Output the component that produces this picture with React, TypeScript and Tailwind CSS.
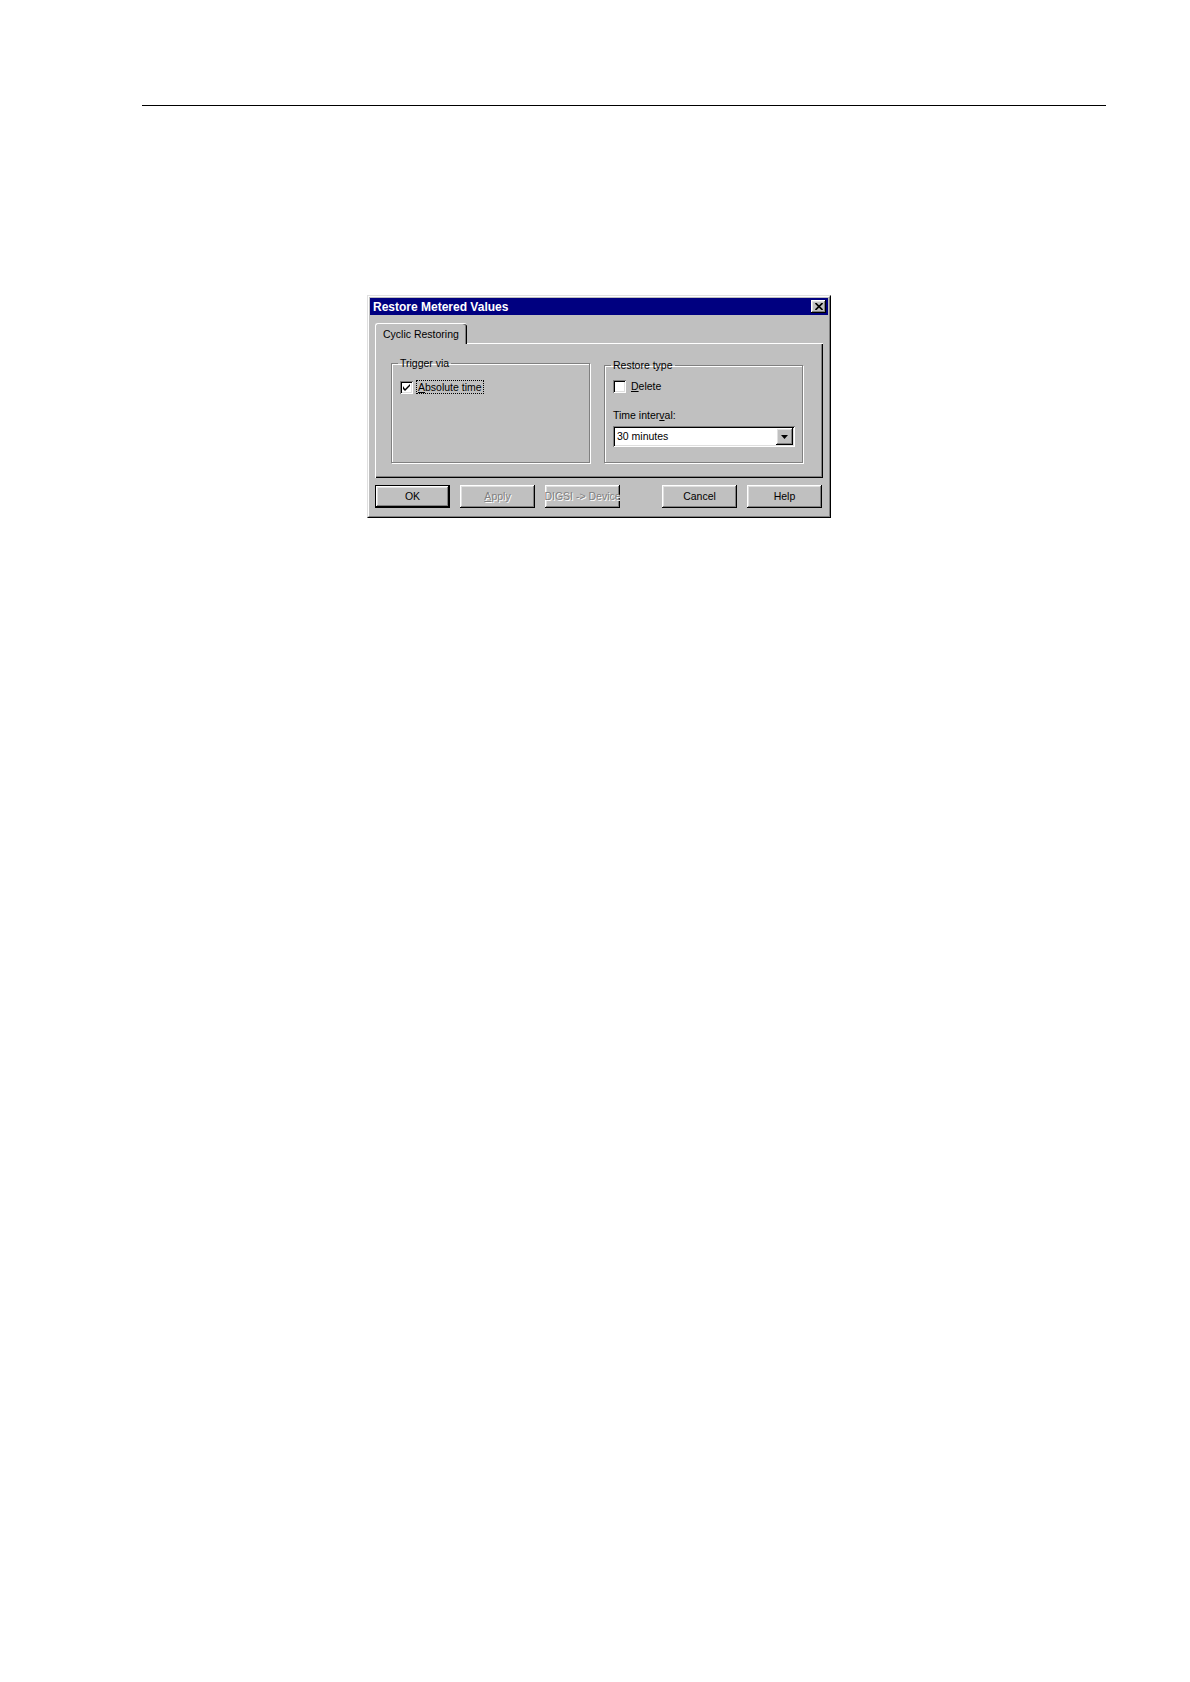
import type { ReactNode } from 'react'

const FONT = { fontFamily: '"Liberation Sans", Arial, sans-serif' }

// Win95-ish raised bevel
const RAISED =
  'shadow-[inset_-1px_-1px_0_#000,inset_1px_1px_0_#fff,inset_-2px_-2px_0_#808080,inset_2px_2px_0_#dfdfdf]'
const SUNKEN =
  'shadow-[inset_1px_1px_0_#808080,inset_-1px_-1px_0_#fff,inset_2px_2px_0_#000,inset_-2px_-2px_0_#dfdfdf]'

function Btn({ children, x, def, disabled }: { children: ReactNode; x?: string; def?: boolean; disabled?: boolean }) {
  return (
    <div
      className={`w-[75px] h-[23px] bg-[#c0c0c0] flex items-center justify-center overflow-hidden whitespace-nowrap text-[10.5px] leading-none ${
        def ? 'border border-black' : ''
      } ${x ?? ''}`}
    >
      <div
        className={`w-full h-full flex items-center justify-center overflow-hidden ${RAISED} ${
          disabled ? 'text-[#808080] [text-shadow:1px_1px_0_#fff]' : 'text-black'
        }`}
      >
        <span className="shrink-0">{children}</span>
      </div>
    </div>
  )
}

function CheckBox({ checked }: { checked?: boolean }) {
  return (
    <div className={`w-[13px] h-[13px] bg-white shrink-0 flex items-center justify-center ${SUNKEN}`}>
      {checked && (
        <svg width="7" height="7" viewBox="0 0 7 7">
          <path d="M0 2 L0 5 L2 7 L7 2 L7 0 L2 5 Z" fill="#000" />
        </svg>
      )}
    </div>
  )
}

function Group({ title, children, cls }: { title: string; children: ReactNode; cls: string }) {
  return (
    <fieldset
      className={`w-[199px] border border-[#808080] shadow-[inset_1px_1px_0_#fff,1px_1px_0_#fff] pl-[8px] pr-[7px] ${cls}`}
    >
      <legend className="-ml-[2px] px-[2px] text-[10.5px] leading-[13px] text-black">{title}</legend>
      {children}
    </fieldset>
  )
}

export default function App() {
  return (
    <div className="min-h-[1682px] w-[1190px] bg-white pt-[105px]" style={FONT}>
      {/* running header rule */}
      <div className="ml-[142px] w-[964px] h-px bg-black" />

      {/* dialog */}
      <div className="ml-[367px] mt-[189px] w-[464px] h-[223px] bg-[#c0c0c0] border border-t-[#dfdfdf] border-l-[#dfdfdf] border-r-black border-b-black">
        <div className="h-full border border-t-white border-l-white border-r-[#808080] border-b-[#808080] p-px">
          {/* title bar */}
          <div className="h-[17px] bg-[#000080] flex items-center justify-between pl-[3px] pr-[2px]">
            <span className="text-white font-bold text-[12px] leading-none">Restore Metered Values</span>
            <div className={`w-[15px] h-[13px] bg-[#c0c0c0] flex items-center justify-center ${RAISED}`}>
              <svg width="8" height="7" viewBox="0 0 8 7">
                <path d="M0.5 0 L7.5 7 M7.5 0 L0.5 7" stroke="#000" strokeWidth="1.6" />
              </svg>
            </div>
          </div>

          <div className="pl-[5px] pt-[8px]">
            {/* tab */}
            <div className="relative z-10 -mb-px w-[92px] h-[21px] bg-[#c0c0c0] border-t border-l border-t-white border-l-white rounded-tl-[3px] rounded-tr-[3px] shadow-[inset_-1px_0_0_#000,inset_-2px_0_0_#808080] flex items-center pl-[7px] text-[10.5px] leading-none">
              Cyclic Restoring
            </div>

            {/* tab panel */}
            <div className="w-[448px] h-[135px] border-t border-l border-t-white border-l-white shadow-[inset_-1px_-1px_0_#000,inset_-2px_-2px_0_#808080] flex gap-[14px] pl-[15px]">
              <Group title="Trigger via" cls="mt-[13px] h-[106px]">
                <div className="mt-[10px] flex items-center">
                  <CheckBox checked />
                  <span className="ml-[3px] border border-dotted border-black px-px text-[10.5px] leading-[12px]">
                    <u>A</u>bsolute time
                  </span>
                </div>
              </Group>
              <Group title="Restore type" cls="mt-[15px] h-[104px]">
                <div className="mt-[8px] flex items-center">
                  <CheckBox />
                  <span className="ml-[5px] text-[10.5px] leading-[13px]">
                    <u>D</u>elete
                  </span>
                </div>
                <div className="mt-[16px] text-[10.5px] leading-[13px]">
                  Time inter<u>v</u>al:
                </div>
                <div className={`mt-[4px] h-[21px] bg-white flex items-center p-[2px] ${SUNKEN}`}>
                  <span className="flex-1 pl-[2px] text-[10.5px] leading-none">30 minutes</span>
                  <div className={`w-[17px] h-[17px] bg-[#c0c0c0] flex items-center justify-center ${RAISED}`}>
                    <svg width="7" height="4" viewBox="0 0 7 4">
                      <path d="M0 0 H7 L3.5 4 Z" fill="#000" />
                    </svg>
                  </div>
                </div>
              </Group>
            </div>

            {/* buttons */}
            <div className="mt-[7px] flex">
              <Btn def>OK</Btn>
              <Btn x="ml-[10px]" disabled>
                <u>A</u>pply
              </Btn>
              <Btn x="ml-[10px]" disabled>
                DIGSI -&gt; Device
              </Btn>
              <Btn x="ml-[42px]">Cancel</Btn>
              <Btn x="ml-[10px]">Help</Btn>
            </div>
          </div>
        </div>
      </div>
    </div>
  )
}
